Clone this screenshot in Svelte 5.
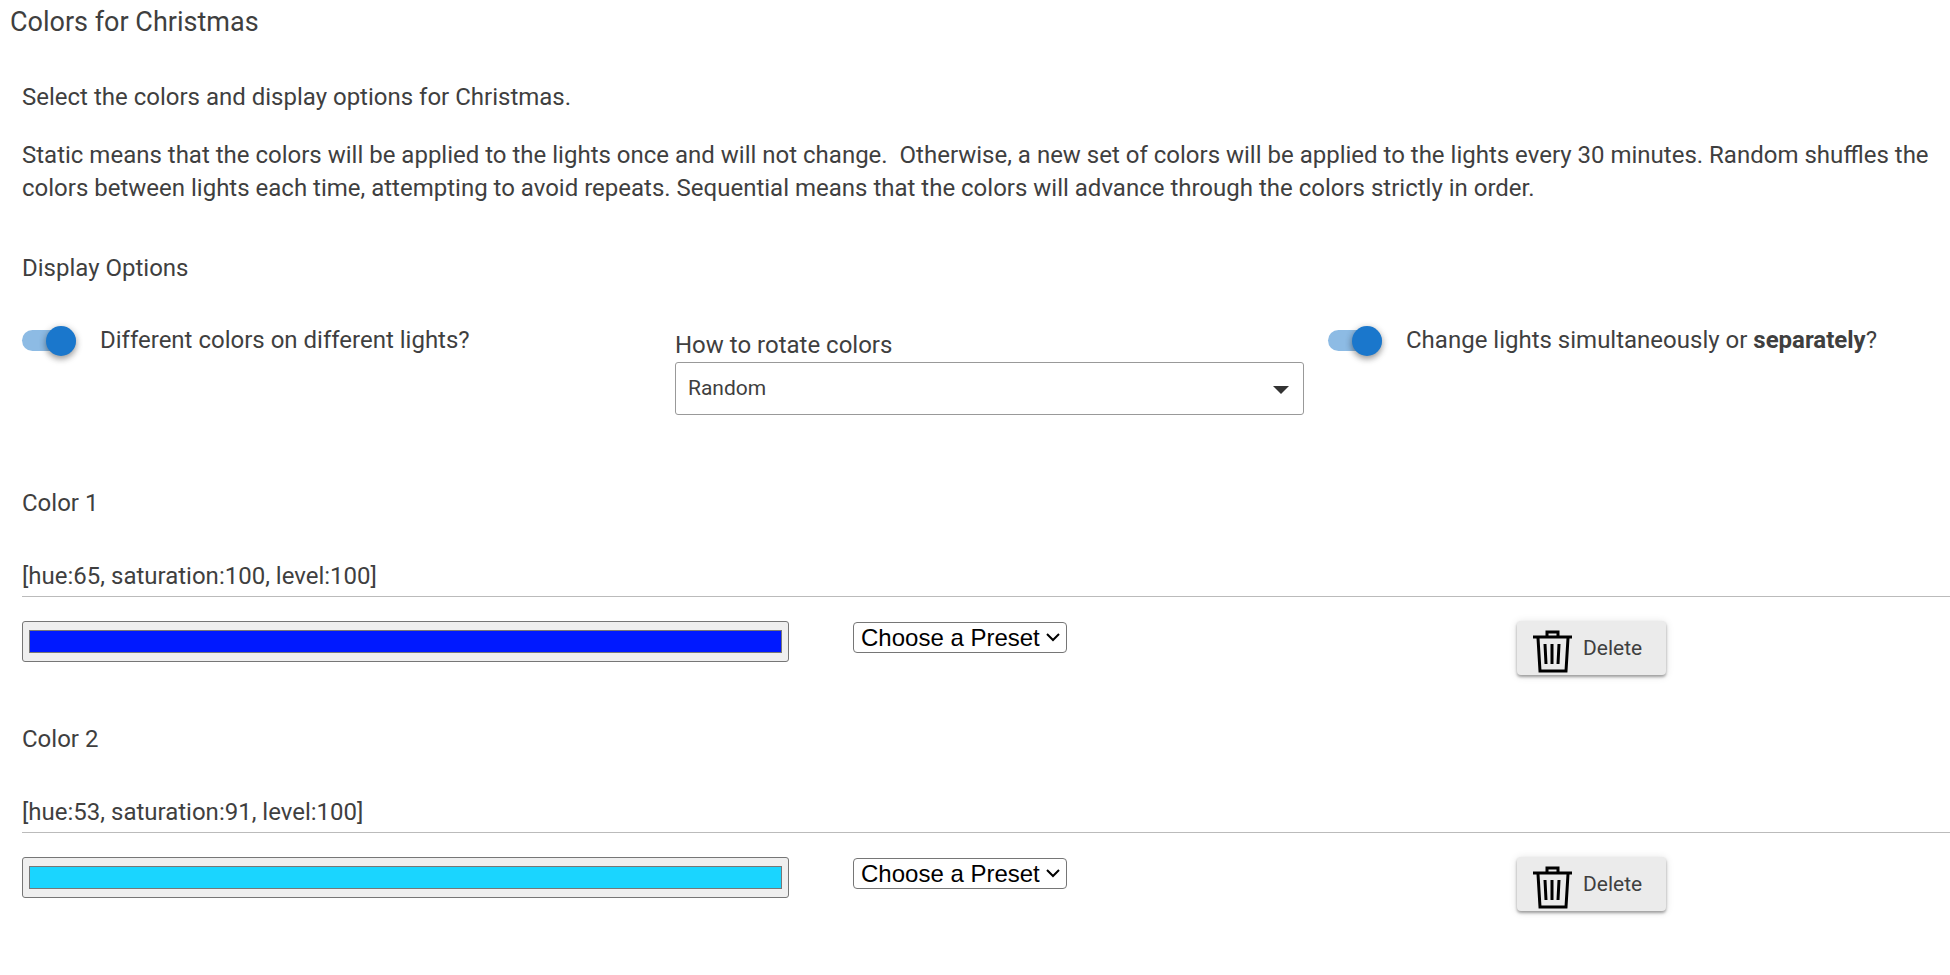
<script>
  let holiday = 'Christmas';
  let interval = 30;
  let differentColors = true;
  let separately = true;
  let rotation = 'Random';

  let colors = [
    { value: '[hue:65, saturation:100, level:100]', hex: '#0019ff', preset: '' },
    { value: '[hue:53, saturation:91, level:100]', hex: '#1ad5ff', preset: '' }
  ];

  const presets = [
    { label: 'White', hex: '#ffffff' },
    { label: 'Red', hex: '#ff0000' },
    { label: 'Green', hex: '#00ff00' },
    { label: 'Blue', hex: '#0000ff' }
  ];

  function applyPreset(color) {
    if (color.preset) {
      color.hex = color.preset;
      colors = colors;
    }
  }

  function removeColor(index) {
    colors = colors.filter((_, i) => i !== index);
  }
</script>

<main class="page">
  <h1 class="title">Colors for {holiday}</h1>

  <div class="content">
    <section class="intro">
      <p>Select the colors and display options for {holiday}.</p>
      <p>
        Static means that the colors will be applied to the lights once and will not change.&nbsp;
        Otherwise, a new set of colors will be applied to the lights every {interval} minutes. Random
        shuffles the colors between lights each time, attempting to avoid repeats. Sequential means
        that the colors will advance through the colors strictly in order.
      </p>
    </section>

    <h2 class="heading">Display Options</h2>
    <div class="options">
      <label class="toggle">
        <input type="checkbox" bind:checked={differentColors} />
        <span>Different colors on different lights?</span>
      </label>

      <div class="rotate">
        <label for="rotation">How to rotate colors</label>
        <div class="rotate-box">
          <select id="rotation" bind:value={rotation}>
            <option>Random</option>
            <option>Static</option>
            <option>Sequential</option>
          </select>
          <svg class="rotate-arrow" viewBox="0 0 18 10" aria-hidden="true">
            <path d="M1 1h16L9 9z" />
          </svg>
        </div>
      </div>

      <label class="toggle">
        <input type="checkbox" bind:checked={separately} />
        <span>Change lights simultaneously or <b>separately</b>?</span>
      </label>
    </div>

    {#each colors as color, i}
      <section class="color">
        <h2 class="heading">Color {i + 1}</h2>
        <p class="color-value">{color.value}</p>
        <div class="color-row">
          <input class="picker" type="color" aria-label="Color {i + 1}" bind:value={color.hex} />
          <div class="preset">
            <select
              aria-label="Preset for color {i + 1}"
              bind:value={color.preset}
              on:change={() => applyPreset(color)}
            >
              <option value="">Choose a Preset</option>
              {#each presets as preset}
                <option value={preset.hex}>{preset.label}</option>
              {/each}
            </select>
            <svg class="preset-arrow" viewBox="0 0 14 9" aria-hidden="true">
              <path d="M1 1l6 6 6-6" />
            </svg>
          </div>
          <button class="delete" type="button" on:click={() => removeColor(i)}>
            <svg class="trash" viewBox="0 0 39 43" aria-hidden="true">
              <path d="M0 7h39M14 6V2h11v4" />
              <path d="M5 8l2 33h26l2-33" />
              <path d="M12 14l1 20M19 14v20M26 14l-1 20" />
            </svg>
            <span>Delete</span>
          </button>
        </div>
      </section>
    {/each}
  </div>
</main>

<style>
  :global(body) {
    background: #fff;
  }

  .page {
    font-family: Roboto, 'Liberation Sans', sans-serif;
    font-size: 24px;
    line-height: 33px;
    color: #3f3f3f;
  }

  .title {
    margin: 0;
    padding: 4px 10px 0;
    font-size: 27px;
    font-weight: 400;
    line-height: 36px;
  }

  .content {
    padding: 41px 0 48px 22px;
  }

  .intro p {
    margin: 0 16px 25px 0;
  }

  .heading {
    margin: 0;
    font-size: 24px;
    font-weight: 400;
  }

  .intro + .heading {
    margin-top: 47px;
  }

  .options {
    display: grid;
    grid-template-columns: 653fr 653fr 622fr;
    align-items: start;
    padding-top: 39px;
  }

  .toggle {
    display: flex;
    align-items: center;
    gap: 24px;
    cursor: pointer;
  }

  .toggle input {
    appearance: none;
    display: flex;
    align-items: center;
    flex: none;
    width: 54px;
    height: 21px;
    margin: 0;
    border-radius: 11px;
    background: #bdbdbd;
    cursor: pointer;
  }

  .toggle input::before {
    content: '';
    width: 30px;
    height: 30px;
    border-radius: 50%;
    background: #fff;
    box-shadow: 0 3px 6px rgba(0, 0, 0, 0.35), 0 1px 8px rgba(0, 0, 0, 0.12);
  }

  .toggle input:checked {
    justify-content: flex-end;
    background: #8dbbe4;
  }

  .toggle input:checked::before {
    background: #1a77cc;
  }

  .rotate {
    display: flex;
    flex-direction: column;
    padding: 5px 24px 0 0;
  }

  .rotate-box {
    position: relative;
  }

  .rotate-box select {
    appearance: none;
    display: block;
    width: 100%;
    height: 53px;
    padding: 0 48px 2px 12px;
    border: 1px solid #999;
    border-radius: 3px;
    background: #fff;
    color: #3f3f3f;
    font-family: inherit;
    font-size: 21px;
  }

  .rotate-arrow {
    position: absolute;
    top: 23px;
    right: 14px;
    width: 18px;
    height: 10px;
    fill: #333;
    pointer-events: none;
  }

  .color {
    padding-top: 72px;
  }

  .color + .color {
    padding-top: 48px;
  }

  .color-value {
    margin: 0;
    padding: 40px 0 3px;
    border-bottom: 1px solid #bbb;
  }

  .color-row {
    display: grid;
    grid-template-columns: 831fr 664fr 433fr;
    align-items: start;
    padding-top: 24px;
  }

  .picker {
    appearance: none;
    box-sizing: border-box;
    width: calc(100% - 64px);
    height: 41px;
    padding: 8px 6px;
    border: 1px solid #767676;
    border-radius: 3px;
    background: #efefef;
  }

  .picker::-webkit-color-swatch-wrapper {
    padding: 0;
  }

  .picker::-webkit-color-swatch {
    border: 1px solid #777;
    border-radius: 0;
  }

  .preset {
    position: relative;
    justify-self: start;
    padding-top: 1px;
  }

  .preset select {
    appearance: none;
    display: block;
    height: 31px;
    padding: 0 26px 0 7px;
    border: 1px solid #767676;
    border-radius: 4px;
    background: #fff;
    color: #000;
    font-family: 'Liberation Sans', Arial, sans-serif;
    font-size: 24px;
  }

  .preset-arrow {
    position: absolute;
    top: 12px;
    right: 7px;
    width: 14px;
    height: 9px;
    fill: none;
    stroke: #000;
    stroke-width: 2;
    pointer-events: none;
  }

  .delete {
    display: flex;
    align-items: center;
    justify-self: start;
    gap: 11px;
    height: 54px;
    padding: 0 24px 0 16px;
    border: 0;
    border-radius: 4px;
    background: #ebebeb;
    box-shadow: 0 2px 3px rgba(0, 0, 0, 0.35), 0 1px 8px rgba(0, 0, 0, 0.12);
    color: #3f3f3f;
    font-family: inherit;
    font-size: 21px;
    cursor: pointer;
  }

  .trash {
    width: 39px;
    height: 43px;
    margin-top: 6px;
    fill: none;
    stroke: #000;
    stroke-width: 3;
  }
</style>
